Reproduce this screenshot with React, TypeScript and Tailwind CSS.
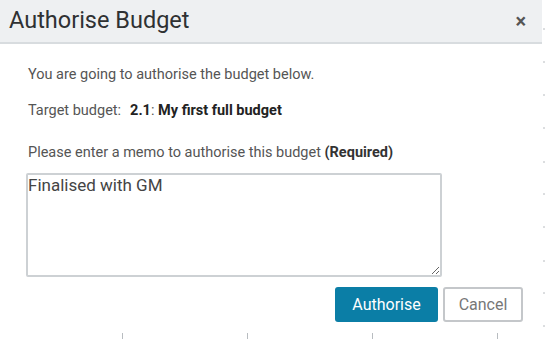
import React from 'react';

const Ticks = () => (
    <svg className="absolute inset-0 pointer-events-none" width={545} height={339} viewBox="0 0 545 339">
        {[29, 62, 95, 128, 162, 194, 227, 261, 293, 326].map((y) => (
            <line key={y} x1={543} x2={545} y1={y} y2={y} stroke="#b8bcc0" strokeWidth={1} />
        ))}
        {[122, 247, 372, 497].map((x) => (
            <line key={x} x1={x + 0.5} x2={x + 0.5} y1={333} y2={339} stroke="#b8bcc0" strokeWidth={1} />
        ))}
    </svg>
);

export default function App() {
    return (
        <div className="relative w-[545px] h-[339px] bg-white overflow-hidden font-['Roboto',sans-serif]">
            <Ticks />
            <div className="relative w-[542px] bg-white">
                {/* Header */}
                <div className="h-[44px] flex items-center justify-between pl-[9px] pr-[16px] bg-[#eef0f2] border-b-2 border-[#d8dcdf]">
                    <h2 className="text-[23.5px] text-[#2f3133] leading-none">Authorise Budget</h2>
                    <button className="text-[20px] leading-none text-[#555] font-bold">×</button>
                </div>

                <div className="pl-[28px] pt-[22px]">
                    <p className="text-[14.5px] text-[#555] leading-[18px]">You are going to authorise the budget below.</p>
                    <p className="mt-[18px] text-[14.5px] text-[#555] leading-[18px]">
                        Target budget:
                        <span className="ml-[9px] font-bold text-[#222]">2.1</span>
                        <span>: </span>
                        <span className="font-bold text-[#222]">My first full budget</span>
                    </p>
                    <p className="mt-[24px] text-[14.5px] text-[#555] leading-[18px]">
                        Please enter a memo to authorise this budget <span className="font-bold text-[#333]">(Required)</span>
                    </p>
                    <textarea
                        className="-ml-[2px] mt-[11px] block w-[416px] h-[104px] border-2 border-[#cdd1d4] rounded-[2px] px-0 pt-0 text-[17px] text-[#444] leading-[20px] resize-y outline-none"
                        defaultValue="Finalised with GM"
                    />
                    <div className="flex justify-end gap-[5px] w-[495px] mt-[10px]">
                        <button className="w-[103px] h-[35px] rounded-[3px] bg-[#0b7ea6] text-white text-[16px]">Authorise</button>
                        <button className="w-[80px] h-[35px] rounded-[3px] border-2 border-[#c4c7ca] bg-white text-[#777] text-[16px]">Cancel</button>
                    </div>
                </div>
            </div>
        </div>
    );
}
